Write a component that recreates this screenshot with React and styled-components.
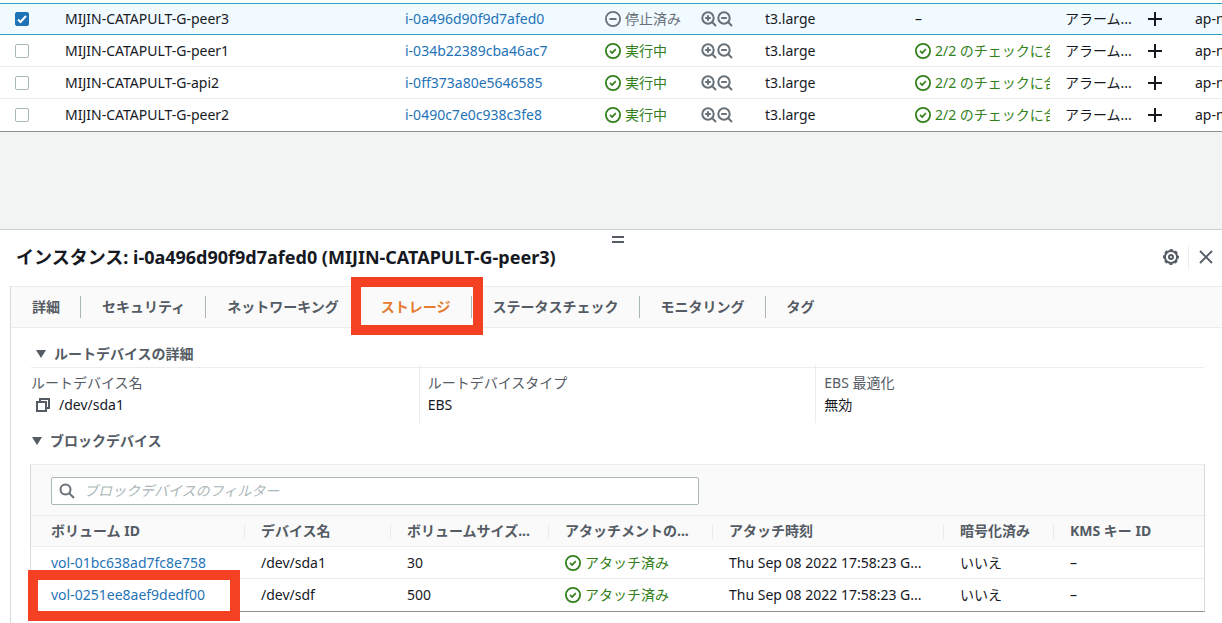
import React, { useState } from 'react'
import styled, { createGlobalStyle, css } from 'styled-components'

const instances = [
  { name: 'MIJIN-CATAPULT-G-peer3', id: 'i-0a496d90f9d7afed0', running: false },
  { name: 'MIJIN-CATAPULT-G-peer1', id: 'i-034b22389cba46ac7', running: true },
  { name: 'MIJIN-CATAPULT-G-api2', id: 'i-0ff373a80e5646585', running: true },
  { name: 'MIJIN-CATAPULT-G-peer2', id: 'i-0490c7e0c938c3fe8', running: true },
]

const tabs = ['詳細', 'セキュリティ', 'ネットワーキング', 'ストレージ', 'ステータスチェック', 'モニタリング', 'タグ']

const volumeHeads = ['ボリューム ID', 'デバイス名', 'ボリュームサイズ...', 'アタッチメントの...', 'アタッチ時刻', '暗号化済み', 'KMS キー ID']

const volumes = [
  { id: 'vol-01bc638ad7fc8e758', device: '/dev/sda1', size: 30 },
  { id: 'vol-0251ee8aef9dedf00', device: '/dev/sdf', size: 500, marked: true },
]

const CheckIcon = () => (
  <Icon viewBox="0 0 16 16" aria-hidden="true">
    <circle cx="8" cy="8" r="7.1" strokeWidth="1.8" />
    <path d="M5 7.8L7.2 10l3.6-3.8" strokeWidth="1.7" />
  </Icon>
)

const StoppedIcon = () => (
  <Icon viewBox="0 0 16 16" aria-hidden="true">
    <circle cx="8" cy="8" r="7.1" strokeWidth="1.8" />
    <path d="M4.5 8h7" />
  </Icon>
)

const ZoomIcon = ({ plus }) => (
  <Icon viewBox="0 0 16 16" aria-hidden="true">
    <circle cx="7" cy="7" r="5.7" />
    <path d="M11 11l4 4M4.2 7h5.6" />
    {plus && <path d="M7 4.2v5.6" />}
  </Icon>
)

const GearIcon = () => (
  <Icon viewBox="0 0 16 16" aria-hidden="true">
    <circle cx="8" cy="8" r="6.1" />
    <circle cx="8" cy="8" r="7.2" strokeWidth="1.6" strokeDasharray="3 2.655" strokeDashoffset="1.5" />
    <circle cx="8" cy="8" r="2" />
  </Icon>
)

const App = () => {
  const [selected, setSelected] = useState('MIJIN-CATAPULT-G-peer3')
  const [tab, setTab] = useState('ストレージ')
  const [filter, setFilter] = useState('')

  return (
    <>
      <GlobalStyle />
      <Page lang="ja">
        <InstanceArea>
          <InstanceTable>
            <colgroup>
              <col width="55" />
              <col width="340" />
              <col width="200" />
              <col width="160" />
              <col width="150" />
              <col width="150" />
              <col width="130" />
              <col width="160" />
            </colgroup>
            <tbody>
              {instances.map((item) => (
                <InstanceRow key={item.name} $selected={selected === item.name}>
                  <td>
                    <CheckLabel>
                      <input
                        type="checkbox"
                        aria-label={item.name}
                        checked={selected === item.name}
                        onChange={() => setSelected(selected === item.name ? '' : item.name)}
                      />
                      <svg viewBox="0 0 14 14" aria-hidden="true">
                        <path d="M3 7.5l2.5 2.5L11 4" />
                      </svg>
                    </CheckLabel>
                  </td>
                  <td>{item.name}</td>
                  <td><Link href="#instance">{item.id}</Link></td>
                  <td>
                    <StateCell>
                      <Status $ok={item.running}>
                        {item.running ? <CheckIcon /> : <StoppedIcon />}
                        {item.running ? '実行中' : '停止済み'}
                      </Status>
                      <ZoomGroup>
                        <IconButton aria-label="この値でフィルター"><ZoomIcon plus /></IconButton>
                        <IconButton aria-label="この値を除外"><ZoomIcon /></IconButton>
                      </ZoomGroup>
                    </StateCell>
                  </td>
                  <td>t3.large</td>
                  <td>
                    {item.running ? <Status $ok><CheckIcon />2/2 のチェックに合</Status> : '–'}
                  </td>
                  <td>
                    <AlarmCell>
                      アラーム...
                      <IconButton aria-label="アラームを追加">
                        <PlusIcon viewBox="0 0 14 14"><path d="M7 0v14M0 7h14" /></PlusIcon>
                      </IconButton>
                    </AlarmCell>
                  </td>
                  <td>ap-northeast-1</td>
                </InstanceRow>
              ))}
            </tbody>
          </InstanceTable>
        </InstanceArea>

        <Panel>
          <HandleBar>
            <Handle aria-label="パネルのサイズを変更"><span /><span /></Handle>
          </HandleBar>
          <PanelHeader>
            <h2>インスタンス: i-0a496d90f9d7afed0 (MIJIN-CATAPULT-G-peer3)</h2>
            <PanelActions>
              <IconButton aria-label="設定"><GearIcon /></IconButton>
              <Separator />
              <IconButton aria-label="閉じる">
                <Icon viewBox="0 0 16 16"><path d="M2 2l12 12M14 2L2 14" strokeWidth="1.8" /></Icon>
              </IconButton>
            </PanelActions>
          </PanelHeader>

          <TabBox>
            <TabList role="tablist">
              {tabs.map((name) => (
                <Tab key={name} role="tab" aria-selected={tab === name} $active={tab === name} onClick={() => setTab(name)}>
                  {name}
                </Tab>
              ))}
            </TabList>

            <TabContent>
              <SectionTitle $root><Triangle viewBox="0 0 10 8"><path d="M0 0h10L5 8z" /></Triangle>ルートデバイスの詳細</SectionTitle>
              <Details>
                <div>
                  <dt>ルートデバイス名</dt>
                  <CopyValue>
                    <IconButton aria-label="コピー">
                      <CopyIcon viewBox="0 0 14 14"><path d="M1 4h9v9H1zM4 4V1h9v9h-3" /></CopyIcon>
                    </IconButton>
                    /dev/sda1
                  </CopyValue>
                </div>
                <div>
                  <dt>ルートデバイスタイプ</dt>
                  <dd>EBS</dd>
                </div>
                <div>
                  <dt>EBS 最適化</dt>
                  <dd>無効</dd>
                </div>
              </Details>

              <SectionTitle><Triangle viewBox="0 0 10 8"><path d="M0 0h10L5 8z" /></Triangle>ブロックデバイス</SectionTitle>
              <VolumeBox>
                <FilterBar>
                  <FilterField>
                    <Icon viewBox="0 0 16 16" aria-hidden="true">
                      <circle cx="6.5" cy="6.5" r="5" />
                      <path d="M10.5 10.5L15 15" />
                    </Icon>
                    <input
                      aria-label="ブロックデバイスのフィルター"
                      placeholder="ブロックデバイスのフィルター"
                      value={filter}
                      onChange={(e) => setFilter(e.target.value)}
                    />
                  </FilterField>
                </FilterBar>
                <VolumeTable>
                  <colgroup>
                    <col width="214" />
                    <col width="146" />
                    <col width="158" />
                    <col width="164" />
                    <col width="231" />
                    <col width="110" />
                    <col />
                  </colgroup>
                  <thead>
                    <tr>{volumeHeads.map((head) => <th key={head}>{head}</th>)}</tr>
                  </thead>
                  <tbody>
                    {volumes.map((vol) => (
                      <tr key={vol.id}>
                        <VolumeIdCell $marked={vol.marked}><Link href="#volume">{vol.id}</Link></VolumeIdCell>
                        <td>{vol.device}</td>
                        <td>{vol.size}</td>
                        <td><Status $ok><CheckIcon />アタッチ済み</Status></td>
                        <td>Thu Sep 08 2022 17:58:23 G...</td>
                        <td>いいえ</td>
                        <td>–</td>
                      </tr>
                    ))}
                  </tbody>
                </VolumeTable>
              </VolumeBox>
            </TabContent>
          </TabBox>
        </Panel>
      </Page>
    </>
  )
}

const GlobalStyle = createGlobalStyle`
  * {
    box-sizing: border-box;
  }

  body {
    margin: 0;
    background: #f2f3f3;
    overflow: hidden;
  }

  button, input {
    font: inherit;
    color: inherit;
  }
`

const Page = styled.div`
  font-family: "Noto Sans", "Noto Sans CJK JP", sans-serif;
  font-size: 14px;
  line-height: 22px;
  color: #16191f;
`

const Icon = styled.svg`
  display: block;
  flex: none;
  width: 16px;
  height: 16px;
  fill: none;
  stroke: currentColor;
  stroke-width: 2;
`

const PlusIcon = styled(Icon)`
  width: 14px;
  height: 14px;
`

const CopyIcon = styled(PlusIcon)``

const IconButton = styled.button`
  display: block;
  padding: 0;
  border: 0;
  background: none;
  cursor: pointer;
`

const Link = styled.a`
  color: #1f73b7;
  text-decoration: none;

  &:hover {
    text-decoration: underline;
  }
`

const Status = styled.span`
  display: flex;
  align-items: center;
  gap: 4px;
  overflow: hidden;
  white-space: nowrap;
  color: ${({ $ok }) => ($ok ? '#327f1a' : '#687078')};
`

const InstanceArea = styled.section`
  overflow: hidden;
  padding-top: 3px;
  margin-bottom: 97px;
  background: #fff;
  border-bottom: 1px solid #879196;
`

const InstanceTable = styled.table`
  table-layout: fixed;
  width: 1345px;
  border-collapse: separate;
  border-spacing: 0;

  td {
    height: 32px;
    padding: 0 5px 0 10px;
    overflow: hidden;
    white-space: nowrap;
    border-bottom: 1px solid #eaeded;
  }

  td:first-child {
    padding-left: 15px;
  }

  tr:last-child td {
    border-bottom: 0;
  }
`

const InstanceRow = styled.tr`
  ${({ $selected }) => $selected && css`
    background: #f1faff;

    && td {
      border-top: 1px solid #2ea0c4;
      border-bottom: 1px solid #2ea0c4;
    }
  `}
`

const CheckLabel = styled.label`
  display: grid;
  width: 14px;

  input, svg {
    grid-area: 1 / 1;
    width: 14px;
    height: 14px;
  }

  input {
    appearance: none;
    margin: 0;
    border: 1px solid #aab7b8;
    border-radius: 2px;
    background: #fff;
  }

  input:checked {
    border-color: #1f73b7;
    background: #1f73b7;
  }

  svg {
    fill: none;
    stroke: #fff;
    stroke-width: 2;
    pointer-events: none;
  }
`

const StateCell = styled.div`
  display: grid;
  grid-template-columns: 96px auto;
  justify-content: start;
  align-items: center;
`

const ZoomGroup = styled.div`
  display: flex;
  color: #687078;
`

const AlarmCell = styled.div`
  display: grid;
  grid-template-columns: 83px auto;
  justify-content: start;
  align-items: center;
`

const Panel = styled.section`
  background: #fff;
  border-top: 1px solid #c8cdcd;
`

const HandleBar = styled.div`
  display: flex;
  justify-content: center;
  padding-left: 14px;
`

const Handle = styled.button`
  display: grid;
  gap: 3px;
  width: 12px;
  padding: 6px 0 0;
  border: 0;
  background: none;
  cursor: row-resize;

  span {
    height: 2px;
    background: #545b64;
  }
`

const PanelHeader = styled.header`
  display: flex;
  align-items: center;
  justify-content: space-between;
  height: 43px;
  padding: 0 8px 16px 16px;

  h2 {
    margin: 0;
    font-size: 18px;
    line-height: 22px;
  }
`

const PanelActions = styled.div`
  display: flex;
  align-items: center;
  gap: 9px;
  color: #545b64;
`

const Separator = styled.span`
  width: 1px;
  height: 24px;
  background: #eaeded;
`

const TabBox = styled.div`
  margin-left: 10px;
  border-left: 1px solid #d5dbdb;
`

const TabList = styled.div`
  display: flex;
  align-items: center;
  height: 42px;
  background: #fafafa;
  border-top: 1px solid #eaeded;
  border-bottom: 1px solid #eaeded;
`

const Tab = styled.button`
  position: relative;
  display: flex;
  align-items: center;
  height: 40px;
  padding: 0 20px 0 21px;
  border: 0;
  background: none;
  font-weight: 700;
  white-space: nowrap;
  color: ${({ $active }) => ($active ? '#e57b2e' : '#545b64')};
  border-right: 1px solid transparent;
  cursor: pointer;

  &:not(:last-child) {
    background: linear-gradient(#aab7b8, #aab7b8) border-box no-repeat right center / 1px 22px;
  }

  ${({ $active }) => $active && css`
    &::after {
      content: '';
      position: absolute;
      z-index: 1;
      inset: -10px -12px -8px -9px;
      border: 10px solid #f54123;
    }
  `}
`

const TabContent = styled.div`
  padding: 15px 10px 40px 11px;
`

const SectionTitle = styled.h3`
  display: flex;
  align-items: center;
  gap: 8px;
  margin: ${({ $root }) => ($root ? '0 8px 0 9px' : '7px 8px 12px 10px')};
  padding: ${({ $root }) => ($root ? '0 0 2px 5px' : '0')};
  border-bottom: ${({ $root }) => ($root ? '1px solid #eaeded' : '0')};
  font-size: 14px;
  line-height: 22px;
  color: #545b64;
`

const Triangle = styled.svg`
  width: 10px;
  height: 8px;
  fill: #545b64;
`

const Details = styled.dl`
  display: grid;
  grid-template-columns: repeat(3, 1fr);
  margin: -3px 0 0;

  > div {
    padding: 7px 9px;
  }

  > div + div {
    padding-left: 8px;
    border-left: 1px solid #eaeded;
  }

  dt {
    color: #545b64;
  }

  dd {
    margin: 0;
  }
`

const CopyValue = styled.dd`
  display: flex;
  align-items: center;
  gap: 9px;
  padding-left: 5px;

  button {
    color: #545b64;
  }
`

const VolumeBox = styled.div`
  margin: 0 7px 0 8px;
  border: 1px solid #d5dbdb;
  border-top-color: #eaeded;
  border-bottom-color: #879196;
`

const FilterBar = styled.div`
  padding: 12px 20px 10px;
  background: #fafafa;
  border-bottom: 1px solid #eaeded;
`

const FilterField = styled.label`
  display: flex;
  align-items: center;
  gap: 9px;
  max-width: 648px;
  height: 28px;
  padding: 0 7px;
  background: #fff;
  border: 1px solid #aab7b8;
  border-radius: 2px;
  color: #687078;

  input {
    flex: 1;
    min-width: 0;
    padding: 0;
    border: 0;
    outline: 0;
    background: none;
    color: #16191f;
  }

  input::placeholder {
    color: #aab7b8;
    font-style: italic;
  }
`

const VolumeTable = styled.table`
  table-layout: fixed;
  width: 100%;
  border-collapse: separate;
  border-spacing: 0;

  th, td {
    height: 32px;
    padding: 0 0 0 16px;
    text-align: left;
    white-space: nowrap;
    border-bottom: 1px solid #eaeded;
  }

  th:first-child, td:first-child {
    padding-left: 20px;
  }

  th {
    height: 31px;
    color: #545b64;
    background: #fafafa;
  }

  th:not(:last-child) {
    background: linear-gradient(#eaeded, #eaeded) no-repeat right center / 1px 15px #fafafa;
  }

  tbody tr:last-child td {
    border-bottom: 0;
  }
`

const VolumeIdCell = styled.td`
  position: relative;

  ${({ $marked }) => $marked && css`
    &::after {
      content: '';
      position: absolute;
      inset: -9px 5px -10px -3px;
      border: 10px solid #f54123;
      pointer-events: none;
    }
  `}
`

export default App
